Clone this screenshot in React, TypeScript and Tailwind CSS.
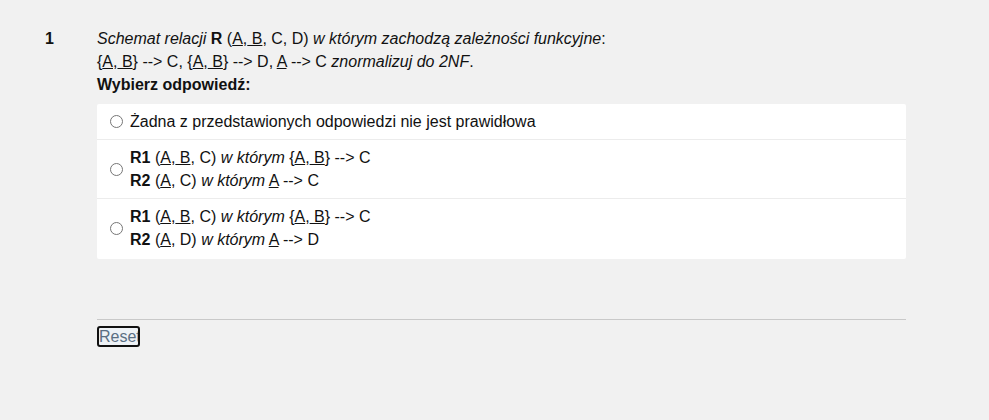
import React from "react";

const U = ({ children }: { children: React.ReactNode }) => <u className="underline">{children}</u>;

function Radio() {
  return <span className="w-[13px] h-[13px] rounded-full border border-[#767676] bg-white shrink-0" />;
}

const options = [
  {
    key: "none",
    content: <span>Żadna z przedstawionych odpowiedzi nie jest prawidłowa</span>,
  },
  {
    key: "ac",
    content: (
      <div>
        <div>
          <b>R1</b> (<U>A</U>,<U> B</U>, C) <i>w którym</i> {"{"}
          <U>A</U>,<U> B</U>
          {"}"} --&gt; C
        </div>
        <div>
          <b>R2</b> (<U>A</U>, C) <i>w którym</i> <U>A</U> --&gt; C
        </div>
      </div>
    ),
  },
  {
    key: "ad",
    content: (
      <div>
        <div>
          <b>R1</b> (<U>A</U>,<U> B</U>, C) <i>w którym</i> {"{"}
          <U>A</U>,<U> B</U>
          {"}"} --&gt; C
        </div>
        <div>
          <b>R2</b> (<U>A</U>, D) <i>w którym</i> <U>A</U> --&gt; D
        </div>
      </div>
    ),
  },
];

export default function App() {
  return (
    <div className="min-h-[420px] bg-[#f1f1f1] text-[#111] text-[16px] leading-[23px] font-['Liberation_Sans',Arial,sans-serif]">
      <div className="flex pt-[27px]">
        {/* Question number */}
        <div className="w-[97px] shrink-0 pl-[45px] font-bold">1</div>

        <div className="w-[809px]">
          <div>
            <i>Schemat relacji</i> <b>R</b> (<U>A</U>,<U> B</U>, C, D) <i>w którym zachodzą zależności funkcyjne</i>:
          </div>
          <div>
            {"{"}
            <U>A</U>,<U> B</U>
            {"}"} --&gt; C, {"{"}
            <U>A</U>,<U> B</U>
            {"}"} --&gt; D, <U>A</U> --&gt; C <i>znormalizuj do 2NF</i>.
          </div>
          <div className="font-bold">Wybierz odpowiedź:</div>

          {/* Answers */}
          <div className="mt-[8px] bg-white rounded-[2px] pb-[2px]">
            {options.map((o, i) => (
              <label
                key={o.key}
                className={
                  "flex items-center gap-[7px] pl-[13px] py-[6px] " +
                  (i > 0 ? "border-t border-[#ececec]" : "")
                }
              >
                <Radio />
                {o.content}
              </label>
            ))}
          </div>

          <div className="mt-[60px] border-t border-[#c9c9c9]" />
          <button className="mt-[6px] w-[43px] h-[21px] overflow-hidden whitespace-nowrap text-left px-0 border-2 border-[#111] rounded-[3px] bg-[#eef2f6] text-[#5b6f83] text-[16px] leading-[17px]">
            Reset
          </button>
        </div>
      </div>
    </div>
  );
}
